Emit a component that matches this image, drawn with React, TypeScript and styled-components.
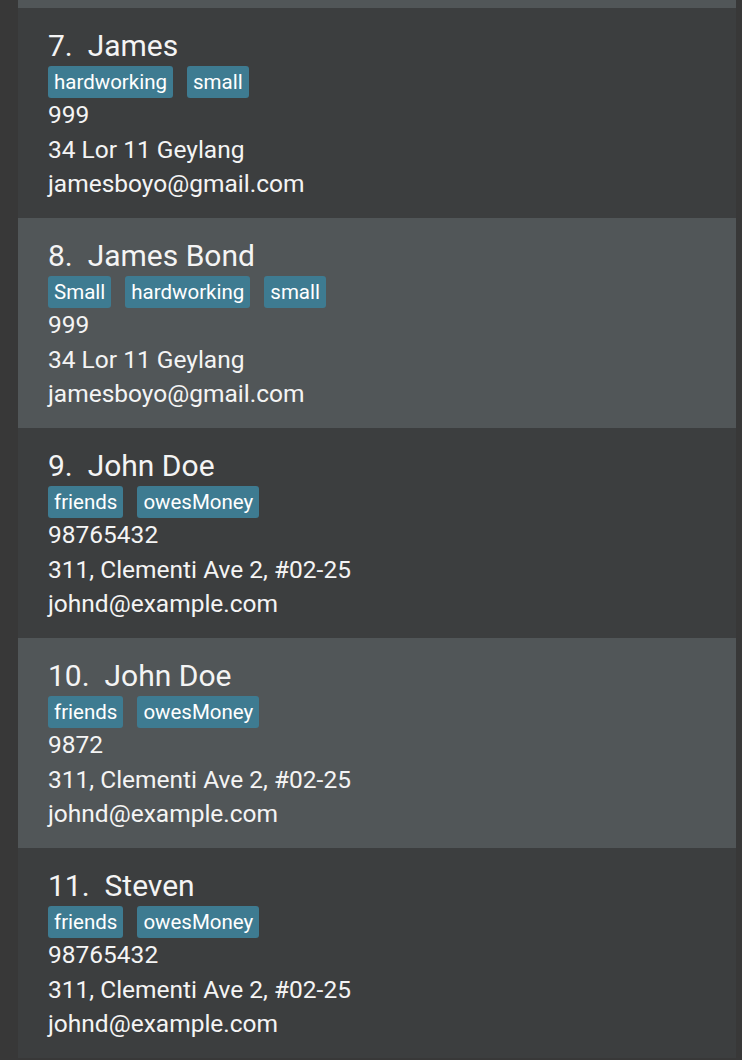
import React from "react";
import styled, { createGlobalStyle } from "styled-components";

const Global = createGlobalStyle`
  html, body { margin: 0; padding: 0; background: #383838; }
  body { font-family: "Segoe UI", Roboto, "Open Sans", sans-serif; }
`;

const Page = styled.div`
  width: 742px;
  height: 1060px;
  overflow: hidden;
  background: #383838;
  padding: 0 6px 0 18px;
  box-sizing: border-box;
`;

const List = styled.div`
  display: flex;
  flex-direction: column;
`;

const Stub = styled.div`
  height: 8px;
  background: #515658;
`;

const Card = styled.div<{ $odd: boolean }>`
  background: ${(p) => (p.$odd ? "#515658" : "#3c3e3f")};
  height: 210px;
  box-sizing: border-box;
  padding: 21px 30px 0 30px;
  display: flex;
  flex-direction: column;
  color: #f4f4f4;
  overflow: hidden;
`;

const Name = styled.div`
  font-size: 30px;
  line-height: 33px;
  white-space: pre;
`;

const Tags = styled.div`
  display: flex;
  gap: 14px;
  margin-top: 4px;
  margin-bottom: 0;
`;

const Tag = styled.span`
  background: #3e7b91;
  color: #ffffff;
  font-size: 20.5px;
  line-height: 32px;
  height: 32px;
  padding: 0 6px;
  border-radius: 3px;
`;

const Field = styled.div`
  font-size: 24.5px;
  line-height: 34.5px;
`;

type Person = {
  idx: number;
  name: string;
  tags: string[];
  phone: string;
  address: string;
  email: string;
};

const people: Person[] = [
  { idx: 7, name: "James", tags: ["hardworking", "small"], phone: "999", address: "34 Lor 11 Geylang", email: "jamesboyo@gmail.com" },
  { idx: 8, name: "James Bond", tags: ["Small", "hardworking", "small"], phone: "999", address: "34 Lor 11 Geylang", email: "jamesboyo@gmail.com" },
  { idx: 9, name: "John Doe", tags: ["friends", "owesMoney"], phone: "98765432", address: "311, Clementi Ave 2, #02-25", email: "johnd@example.com" },
  { idx: 10, name: "John Doe", tags: ["friends", "owesMoney"], phone: "9872", address: "311, Clementi Ave 2, #02-25", email: "johnd@example.com" },
  { idx: 11, name: "Steven", tags: ["friends", "owesMoney"], phone: "98765432", address: "311, Clementi Ave 2, #02-25", email: "johnd@example.com" },
];

export default function App() {
  return (
    <Page>
      <Global />
      <List>
        <Stub />
        {people.map((p) => (
          <Card key={p.idx} $odd={p.idx % 2 === 0}>
            <Name>{`${p.idx}.  ${p.name}`}</Name>
            <Tags>
              {p.tags.map((t, i) => (
                <Tag key={i}>{t}</Tag>
              ))}
            </Tags>
            <Field>{p.phone}</Field>
            <Field>{p.address}</Field>
            <Field>{p.email}</Field>
          </Card>
        ))}
      </List>
    </Page>
  );
}
